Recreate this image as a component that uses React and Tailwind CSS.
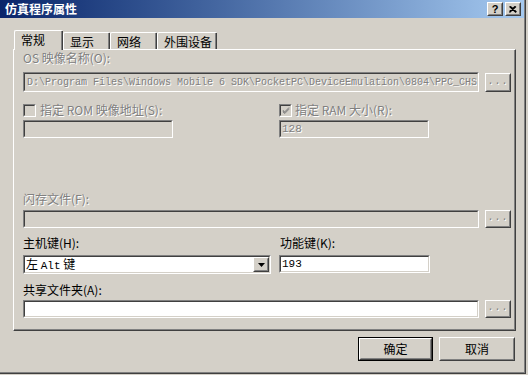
import React from 'react';

// classic win2k-style dialog: 仿真程序属性

const Sunken = ({ className = '', white = false, children }) => (
  <div className={`border border-t-[#808080] border-l-[#808080] border-b-white border-r-white ${className}`}>
    <div
      className={`h-full border border-t-[#404040] border-l-[#404040] border-b-[#d4d0c8] border-r-[#d4d0c8] flex items-center overflow-hidden ${
        white ? 'bg-white' : 'bg-[#d4d0c8]'
      }`}
    >
      {children}
    </div>
  </div>
);

const Raised = ({ className = '', children }) => (
  <div className={`border border-t-white border-l-white border-b-[#404040] border-r-[#404040] bg-[#d4d0c8] ${className}`}>
    <div className="h-full border border-t-[#d4d0c8] border-l-[#d4d0c8] border-b-[#808080] border-r-[#808080] flex items-center justify-center">
      {children}
    </div>
  </div>
);

const Disabled = ({ children, className = '' }) => (
  <span className={`text-[#808080] [text-shadow:1px_1px_0_#ffffff] ${className}`}>{children}</span>
);

const Browse = ({ className = '' }) => (
  <Raised className={`w-[26px] ml-[6px] ${className}`}>
    <Disabled className="font-['Liberation_Mono',monospace] text-[10px] tracking-[1px] leading-none pb-[2px]">...</Disabled>
  </Raised>
);

const CheckBox = ({ checked }) => (
  <Sunken className="w-[13px] h-[13px]">
    {checked && (
      <svg width="9" height="9" viewBox="0 0 9 9" className="ml-[1px]">
        <path d="M1 4 L3 6 L8 1 M1 5 L3 7 L8 2 M1 6 L3 8 L8 3" stroke="#808080" strokeWidth="1" fill="none" />
      </svg>
    )}
  </Sunken>
);

const Label = ({ children, disabled, className = '' }) => (
  <div className={`h-[14px] leading-[14px] whitespace-nowrap ${className}`}>
    {disabled ? <Disabled>{children}</Disabled> : children}
  </div>
);

const TitleBar = () => (
  <div className="h-[18px] w-full flex items-center bg-linear-to-r from-[#0a246a] to-[#a6caf0] pl-[5px] pr-[3px]">
    <span className="text-white font-bold text-[12px] leading-none">仿真程序属性</span>
    <div className="ml-auto flex gap-[2px]">
      <Raised className="w-[16px] h-[14px]">
        <span className="font-['Liberation_Sans',sans-serif] font-bold text-[11px] leading-none">?</span>
      </Raised>
      <Raised className="w-[16px] h-[14px]">
        <svg width="8" height="7" viewBox="0 0 8 7">
          <path d="M0.5 0.5 L7 6.5 M1.5 0.5 L7.5 6 M7 0.5 L0.5 6.5 M6 0.5 L0.5 5.5" stroke="#000" strokeWidth="1.1" fill="none" />
        </svg>
      </Raised>
    </div>
  </div>
);

const Tab = ({ label, active, width }) => (
  <div
    className={`${width} border-t border-l border-white rounded-tl-[2px] rounded-tr-[2px] bg-[#d4d0c8] ${
      active ? 'h-[20px] mb-[-1px] relative z-10 ml-[1px]' : 'h-[17px]'
    }`}
  >
    <div className="h-full border-r border-r-[#404040]">
      <div className="h-full border-r border-r-[#808080] pl-[6px] leading-[15px] pt-[1px]">{label}</div>
    </div>
  </div>
);

const Panel = () => (
  <div className="w-[503px] h-[282px] border-t border-l border-white border-r border-b border-r-[#404040] border-b-[#404040]">
    <div className="h-full border-r border-b border-r-[#808080] border-b-[#808080] pl-[9px] pr-[3px] flex flex-col">
      <Label disabled className="mt-[1px]">OS 映像名称(O):</Label>
      <div className="flex mt-[7px] h-[20px]">
        <Sunken className="flex-1">
          <Disabled className="font-['Liberation_Mono',monospace] text-[10px] pl-[2px] whitespace-nowrap">
            D:\Program Files\Windows Mobile 6 SDK\PocketPC\DeviceEmulation\0804\PPC_CHS
          </Disabled>
        </Sunken>
        <Browse className="h-[19px] self-end" />
      </div>

      <div className="flex mt-[11px] h-[14px]">
        <div className="w-[256px] flex items-center gap-[4px]">
          <CheckBox />
          <Label disabled>指定 ROM 映像地址(S):</Label>
        </div>
        <div className="flex items-center gap-[3px]">
          <CheckBox checked />
          <Label disabled>指定 RAM 大小(R):</Label>
        </div>
      </div>
      <div className="flex mt-[3px] h-[18px]">
        <div className="w-[256px]">
          <Sunken className="w-[150px] h-full" />
        </div>
        <Sunken className="w-[150px] h-full">
          <Disabled className="font-['Liberation_Mono',monospace] text-[11px] pl-[1px]">128</Disabled>
        </Sunken>
      </div>

      <Label disabled className="mt-[54px]">闪存文件(F):</Label>
      <div className="flex mt-[4px] h-[18px]">
        <Sunken className="flex-1" />
        <Browse />
      </div>

      <div className="flex mt-[8px]">
        <Label className="w-[257px]">主机键(H):</Label>
        <Label>功能键(K):</Label>
      </div>
      <div className="flex mt-[5px] h-[19px]">
        <div className="w-[256px]">
          <Sunken white className="w-[248px] h-full">
            <span className="pl-[1px] flex-1 whitespace-nowrap">
              左 <span className="font-['Liberation_Mono',monospace] text-[11px]">Alt</span> 键
            </span>
            <Raised className="w-[16px] h-[15px]">
              <svg width="7" height="4" viewBox="0 0 7 4">
                <path d="M0 0 H7 L3.5 4 Z" fill="#000" />
              </svg>
            </Raised>
          </Sunken>
        </div>
        <Sunken white className="w-[151px] h-[18px]">
          <span className="font-['Liberation_Mono',monospace] text-[11px] pl-[1px]">193</span>
        </Sunken>
      </div>

      <Label className="mt-[9px]">共享文件夹(A):</Label>
      <div className="flex mt-[3px] h-[18px]">
        <Sunken white className="flex-1" />
        <Browse />
      </div>
    </div>
  </div>
);

export default function App() {
  return (
    <div className="w-[528px] h-[375px] bg-[#d4d0c8] font-['Noto_Sans_CJK_SC',sans-serif] text-[12px] text-black overflow-hidden">
      <div className="w-[526px] h-[374px] border-r border-b border-[#404040]">
        <div className="h-full border-r border-b border-[#808080] flex flex-col">
          <TitleBar />
          <div className="pl-[13px] mt-[12px]">
            <div className="flex items-end h-[19px]">
              <Tab label="常规" active width="w-[49px]" />
              <Tab label="显示" width="w-[47px]" />
              <Tab label="网络" width="w-[47px]" />
              <Tab label="外围设备" width="w-[60px]" />
            </div>
            <Panel />
            <div className="w-[503px] flex justify-end gap-[6px] mt-[6px] pr-[1px]">
              <div className="border border-black w-[75px] h-[24px]">
                <Raised className="h-full">确定</Raised>
              </div>
              <Raised className="w-[76px] h-[24px]">取消</Raised>
            </div>
          </div>
        </div>
      </div>
    </div>
  );
}
